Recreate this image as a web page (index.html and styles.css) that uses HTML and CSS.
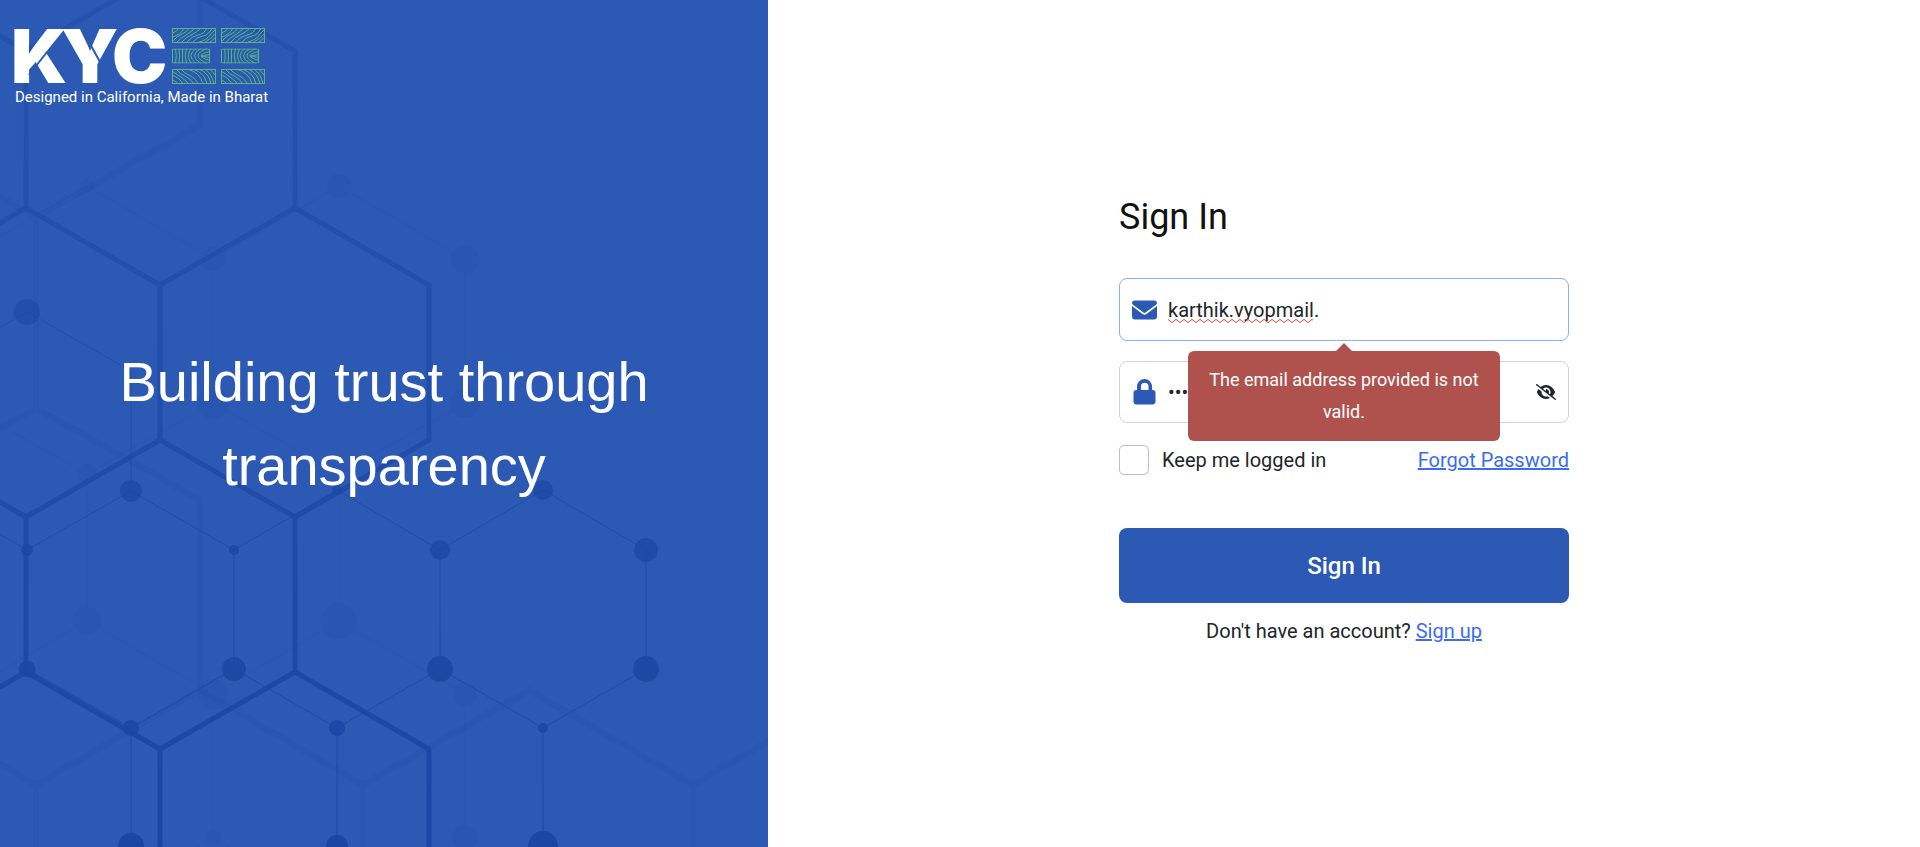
FILE: index.html
```html
<!DOCTYPE html>
<html lang="en">
<head>
<meta charset="utf-8">
<meta name="viewport" content="width=device-width, initial-scale=1">
<title>KYCEE - Sign In</title>
<link rel="stylesheet" href="styles.css">
</head>
<body>
<div class="page">
  <section class="brand">
    <svg class="brand-pattern" viewBox="1 0 768 847" preserveAspectRatio="xMinYMin slice" aria-hidden="true">
      <defs>
        <linearGradient id="fade" gradientUnits="userSpaceOnUse" x1="0" y1="0" x2="0" y2="847">
          <stop offset="0" stop-color="#1b47a4" stop-opacity=".4"/>
          <stop offset=".4" stop-color="#1b47a4" stop-opacity=".6"/>
          <stop offset="1" stop-color="#1b47a4" stop-opacity="1"/>
        </linearGradient>
      </defs>
      <g class="hex-soft">
        <path d="M201-20V125L37 217L-20 185M37 217V408L-20 440M37 408L201 500V690L37 785L-20 752M37 785V860M201 690L364 785V860M364 785L530 690L694 785V860M694 785L780 735"/>
      </g>
      <g class="net-soft">
        <path d="M-38 259L88 186L214 259V403L88 474V621L214 694V838M214 259L340 186L466 259V403L340 474V621L466 694V838M214 403L340 474M340 621L214 694M88 474L-38 403M88 621L-38 694M214 838L88 910M214 838L340 910"/>
        <circle cx="88" cy="186" r="7"/><circle cx="340" cy="186" r="12"/><circle cx="214" cy="259" r="12"/><circle cx="466" cy="259" r="14"/>
        <circle cx="88" cy="474" r="10"/><circle cx="214" cy="403" r="16"/><circle cx="466" cy="403" r="15"/><circle cx="88" cy="621" r="14"/>
        <circle cx="340" cy="621" r="18"/><circle cx="214" cy="694" r="15"/><circle cx="466" cy="694" r="12"/><circle cx="214" cy="838" r="8"/><circle cx="466" cy="838" r="13"/>
      </g>
      <path class="hex-strong" d="M-108-26L27 51L161-26L296 51V208L430 285V440L296 517L161 440V285L296 208M27 51V208L161 285M27 208L-108 285M161 440L27 517L-108 440M27 517V672L161 749V860M27 672L-108 749M161 749L296 672V517M296 672L430 749V860"/>
      <path class="net-line" d="M-10 334L28 312L132 371V491L28 550L-10 528M132 491L235 550V669L132 728V846M28 669L132 728M235 550L338 490L441 550V669L338 728V846M235 669L338 728M441 550L544 490L647 550V669L544 728V846M441 669L544 728"/>
      <g class="net-dot">
        <circle cx="28" cy="312" r="13"/><circle cx="132" cy="491" r="11"/><circle cx="28" cy="550" r="6"/><circle cx="28" cy="669" r="8.500"/>
        <circle cx="235" cy="550" r="5"/><circle cx="235" cy="669" r="12"/><circle cx="132" cy="728" r="8"/><circle cx="132" cy="846" r="13"/>
        <circle cx="338" cy="490" r="5"/><circle cx="338" cy="728" r="8"/><circle cx="338" cy="846" r="11"/><circle cx="441" cy="550" r="10"/>
        <circle cx="441" cy="669" r="13"/><circle cx="544" cy="490" r="10"/><circle cx="544" cy="728" r="5"/><circle cx="544" cy="846" r="15"/>
        <circle cx="647" cy="550" r="12"/><circle cx="647" cy="669" r="13"/>
      </g>
    </svg>

    <header class="brand-head">
      <svg class="logo" viewBox="0 0 252 56" role="img" aria-label="KYCEE">
        <defs>
          <g id="print-bars">
            <svg x="0" y="0" width="44" height="15"><path d="M0 5Q5 4 7 0M0 9Q9 7 12 0M1 13Q5 8 10 6T17 0M5 14Q9 10 14 7T23 0M10 14Q14 9 19 7T29 0M15 14Q20 8 26 7T35 0M21 14Q25 9 31 8T40 0M27 14Q35 12 38 7L43 2M33 14Q39 11 43 6M38 14L43 10"/><rect x=".5" y=".5" width="43" height="14"/></svg>
            <svg x="0" y="20.500" width="38" height="15"><path d="M3.500 0Q5 7 3.500 15M7 0Q8 7 7 15M10.500 0V15M14.500 0Q12 7 14.500 15M19 0Q14 7 19 15M24 0Q14 7 24 15M29 0Q16 7 29 15M35 0Q17 7 35 15M38 3Q20 7 38 12M38 6L29 7.500L38 9"/><rect x=".5" y=".5" width="37" height="14"/></svg>
            <svg x="0" y="41" width="44" height="15"><path d="M0 11Q4 12 6 15M0 6Q8 9 11 15M0 2Q6 6 9 8T17 15M4 0Q8 5 13 7T22 15M9 0Q12 4 17 6T27 15M15 0Q28 3 31 15M21 0Q33 4 35 15M27 0Q37 4 39 15M33 0Q40 5 42 15M38 0L43 6"/><rect x=".5" y=".5" width="43" height="14"/></svg>
          </g>
        </defs>
        <text class="logo-word" y="55" x="-4 46 97">KYC</text>
        <path class="logo-cut" d="M14 47L32 24M74 14L85 34"/>
        <use class="logo-print" href="#print-bars" x="157"/>
        <use class="logo-print" href="#print-bars" x="206"/>
      </svg>
      <p class="tagline">Designed in California, Made in Bharat</p>
    </header>
    <h1 class="headline">Building trust through transparency</h1>
  </section>

  <main class="auth">
    <form class="form" novalidate>
      <h2 class="title">Sign In</h2>

      <div class="field field-active">
        <svg class="field-icon" viewBox="0 0 26 26" aria-hidden="true"><path d="M2.500 3.500h20a2.400 2.400 0 0 1 1.500 4.300L13.500 15.600a1.700 1.700 0 0 1-2 0L1 7.800A2.400 2.400 0 0 1 2.500 3.500zM0 9l10.500 8a3.200 3.200 0 0 0 4 0L25 9v10.500a3 3 0 0 1-3 3H3a3 3 0 0 1-3-3z"/></svg>
        <input class="field-input" type="text" aria-label="Email" aria-describedby="email-error" value="karthik.vyopmail." spellcheck="false">
        <svg class="squiggle" aria-hidden="true"><defs><pattern id="wave" width="8" height="4" patternUnits="userSpaceOnUse"><path d="M-2 2L0 .8L1 .8L3 3.200H5L7 .8H9"/></pattern></defs><rect class="squiggle-fill" width="100%" height="4"/></svg>
        <div class="tooltip" id="email-error" role="alert">The email address provided is not valid.</div>
      </div>

      <div class="field">
        <svg class="field-icon" viewBox="0 0 26 26" aria-hidden="true"><path fill-rule="evenodd" d="M5 11V7.500a7.500 7.500 0 0 1 15 0V11h.5a3 3 0 0 1 3 3v8.500a3 3 0 0 1-3 3h-16a3 3 0 0 1-3-3V14a3 3 0 0 1 3-3zM9 11h7.500V7.500a3.750 3.750 0 0 0-7.500 0z"/></svg>
        <input class="field-input" type="password" aria-label="Password" value="password">
        <button class="reveal" type="button" aria-label="Show password">
          <svg class="reveal-icon" viewBox="0 0 640 512" aria-hidden="true"><path d="M38.800 5.100C28.400-3.100 13.300-1.200 5.100 9.200S-1.200 34.700 9.200 42.900l592 464c10.400 8.200 25.500 6.300 33.700-4.100s6.300-25.500-4.100-33.700L525.600 386.700c39.600-40.600 66.400-86.100 79.900-118.400 3.300-7.900 3.300-16.700 0-24.600-14.900-35.700-46.200-87.700-93-131.100C465.500 68.800 400.800 32 320 32c-68.200 0-125 26.300-169.300 60.800L38.800 5.100zM223.100 149.500C248.600 126.200 282.700 112 320 112c79.500 0 144 64.500 144 144 0 24.900-6.300 48.300-17.400 68.700L408 294.500c8.400-19.300 10.600-41.400 4.800-63.300-11.100-41.500-47.800-69.400-88.600-71.100-5.800-.2-9.200 6.100-7.400 11.700 2.100 6.400 3.300 13.200 3.300 20.300 0 10.200-2.400 19.800-6.600 28.300l-90.300-70.800zM373 389.900c-16.400 6.500-34.300 10.100-53 10.100-79.500 0-144-64.500-144-144 0-6.900.5-13.600 1.400-20.200L83.100 161.500C60.300 191.200 44 220.800 34.500 243.700c-3.300 7.900-3.300 16.700 0 24.600 14.900 35.700 46.200 87.700 93 131.100C174.500 443.200 239.200 480 320 480c47.800 0 89.900-12.900 126.200-32.500L373 389.900z"/></svg>
        </button>
      </div>

      <div class="options">
        <label class="keep"><input class="keep-box" type="checkbox">Keep me logged in</label>
        <a class="link" href="#forgot">Forgot Password</a>
      </div>

      <button class="submit" type="submit">Sign In</button>
      <p class="signup">Don't have an account? <a class="link" href="#signup">Sign up</a></p>
    </form>
  </main>
</div>
</body>
</html>
```

FILE: styles.css
```css
* {
  box-sizing: border-box;
}

body {
  margin: 0;
  color: #212529;
  background: #fff;
  font: 20px/32px Roboto, "Open Sans", sans-serif;
}

.page {
  display: grid;
  grid-template-columns: 2fr 3fr;
  min-height: 100vh;
}

/* Brand panel */
.brand {
  position: relative;
  overflow: hidden;
  display: grid;
  grid-template-rows: 1fr auto 1fr;
  color: #fff;
  background: #2b59b3;
}

.brand-pattern {
  position: absolute;
  inset: 0;
  width: 100%;
  height: 100%;
}

.hex-soft {
  fill: none;
  stroke: #1b47a4;
  stroke-width: 6;
  opacity: .18;
}

.net-soft {
  fill: #1b47a4;
  opacity: .16;
}

.net-soft path {
  fill: none;
  stroke: #1b47a4;
  stroke-width: 1;
}

.hex-strong {
  fill: none;
  stroke: url(#fade);
  stroke-width: 5;
}

.net-line {
  fill: none;
  stroke: url(#fade);
  stroke-width: 1;
}

.net-dot {
  fill: url(#fade);
}

.brand-head {
  position: relative;
  padding: 28px 15px;
}

.logo {
  display: block;
  width: 252px;
  height: 56px;
  overflow: visible;
}

.logo-word {
  fill: #fff;
  font-family: Inter, sans-serif;
  font-size: 74px;
  font-weight: 900;
}

.logo-cut {
  fill: none;
  stroke: #2b59b3;
  stroke-width: 2;
}

.logo-print {
  fill: none;
  stroke: #5cb578;
  stroke-width: 1;
}

.tagline {
  margin: 0;
  font-size: 15px;
  line-height: 26px;
}

.headline {
  position: relative;
  margin: 0;
  padding: 0 80px;
  font: 56px/84px "Liberation Sans", Arial, sans-serif;
  text-align: center;
}

/* Sign-in form */
.auth {
  display: flex;
  align-items: center;
  justify-content: center;
  padding: 24px;
}

.form {
  width: 100%;
  max-width: 450px;
  padding-bottom: 5px;
}

.title {
  margin: 0 0 39px;
  color: #111;
  font-size: 36px;
  font-weight: 400;
  line-height: 44px;
}

.field {
  position: relative;
  display: flex;
  align-items: center;
  gap: 10px;
  height: 62px;
  margin-bottom: 20px;
  padding: 0 12px;
  border: 1px solid #ced4da;
  border-radius: 8px;
}

.field-active {
  height: 63px;
  border-color: #86b0f7;
}

.field-icon {
  flex: none;
  width: 26px;
  height: 26px;
  fill: #2b59b3;
}

.field-input {
  flex: 1;
  min-width: 0;
  padding: 0;
  border: 0;
  outline: 0;
  color: #212529;
  background: none;
  font: inherit;
}

.squiggle {
  position: absolute;
  top: 40px;
  left: 48px;
  width: 145px;
  height: 4px;
  fill: none;
  stroke: #f0423c;
}

.squiggle-fill {
  fill: url(#wave);
  stroke: none;
}

.tooltip {
  position: absolute;
  z-index: 1;
  top: 72px;
  left: 50%;
  width: 312px;
  margin-left: -156px;
  padding: 13px 16px;
  border-radius: 6px;
  color: #fff;
  background: #af524d;
  font-size: 18px;
  text-align: center;
}

.tooltip::before {
  content: "";
  position: absolute;
  bottom: 100%;
  left: 50%;
  margin-left: -8px;
  border: 8px solid transparent;
  border-top: 0;
  border-bottom-color: #af524d;
}

.reveal {
  display: flex;
  padding: 0;
  border: 0;
  background: none;
}

.reveal-icon {
  width: 20px;
  height: 16px;
  fill: #212529;
}

.options {
  display: flex;
  align-items: center;
  justify-content: space-between;
  margin: 22px 0 53px;
}

.keep {
  display: flex;
  align-items: center;
  gap: 13px;
  line-height: 30px;
}

.keep-box {
  width: 30px;
  height: 30px;
  margin: 0;
  border: 1px solid #bfbfbf;
  border-radius: 5px;
  appearance: none;
  background: #fff;
}

.link {
  color: #3b6cf6;
  line-height: 30px;
  text-decoration: underline;
}

.submit {
  display: block;
  width: 100%;
  height: 75px;
  border: 0;
  border-radius: 8px;
  color: #fff;
  background: #2b59b3;
  font: 500 24px/32px Roboto, sans-serif;
}

.signup {
  margin: 12px 0 0;
  text-align: center;
}
```
